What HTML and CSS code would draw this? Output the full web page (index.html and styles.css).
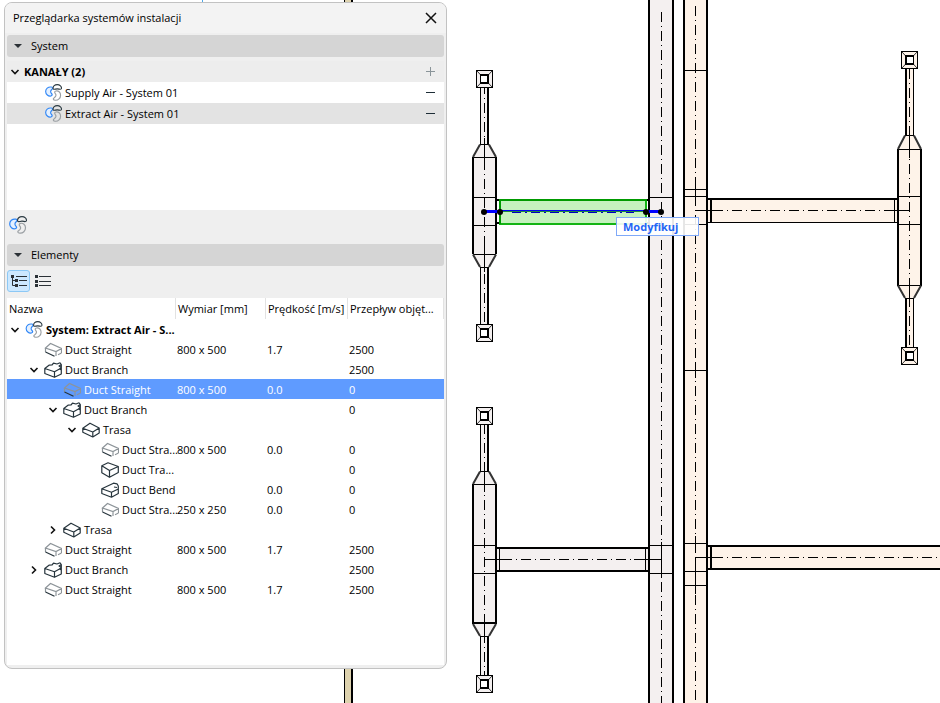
FILE: index.html
```html
<!DOCTYPE html>
<html lang="pl">
<head>
<meta charset="utf-8">
<title>Przeglądarka systemów instalacji</title>
<link rel="stylesheet" href="styles.css">
</head>
<body>
<svg class="defs" width="0" height="0" aria-hidden="true">
  <symbol id="fan" viewBox="0 0 18 18">
    <path class="blade-blue" d="M6.800 3.200C3 2.800.7 5 .7 8c0 3 2.800 5.300 5.600 4.700 1.900-.5 1.500-1.800.4-2.900-1.200-1.200-.9-2.800.5-4C8.400 4.800 8.300 3.400 6.800 3.200Z"/>
    <path class="blade-dark" d="M8.600 5C8.200 2 10.500.7 13 .7s5 1.800 4.300 4.300c-.8 1.200-2.300.2-4.300.2S9.400 6.400 8.600 5Z"/>
    <path class="blade-grey" d="M11.500 7.400c2.600-.7 5 1.400 5 4.400 0 3.200-2.500 5.600-5.600 5.400-2.400-.2-2.700-1.800-1.100-2.700 2-1.200 2.400-2.900 1-4.500-1-1.200-.6-2.300.7-2.600Z"/>
  </symbol>
  <symbol id="straight" viewBox="0 0 18 16">
    <path class="faint" d="M1.500 6V10M1.500 6L6.500 1.500L17.500 6.500L12 9.500ZM12 9.500V14M17.500 6.500V11M14 12.800L17.500 11"/>
    <path class="stroke" d="M1.500 10L10.500 14.300"/>
  </symbol>
  <symbol id="route" viewBox="0 0 18 16">
    <path class="stroke" d="M.8 6.200L8 1.200L17.200 6L10.800 10ZM.8 6.200V10.200L10.800 15L17.200 11V6M10.800 10V15"/>
  </symbol>
  <symbol id="branch" viewBox="0 0 18 16">
    <path class="stroke" d="M.8 6.500L5 3.200L8 3L9.500 1.200L13 2L16 .8L17.300 2.500L15 4L17.300 5.500L15.500 7L17.300 8V12L10.500 15.300L.8 11.500ZM.8 6.500L10.500 9.800L15.500 7M10.500 9.800V15.300M17.300 2.500V8"/>
  </symbol>
  <symbol id="transition" viewBox="0 0 18 16">
    <path class="stroke" d="M.8 3.800L7 .8L17.300 4.500L8.500 8.500ZM.8 3.800V10.800L8.500 15.300L17.300 10.500V4.500M8.500 8.500V15.300"/>
  </symbol>
  <symbol id="bend" viewBox="0 0 18 16">
    <path class="stroke" d="M.8 6.800L12.500 1.200L16 1.800L17.300 4V11.500L10.500 15.200L.8 11.500ZM.8 6.800L10.500 10.300L17.300 7M10.500 10.300V15.200M13 5L16 5.500"/>
  </symbol>
  <symbol id="open" viewBox="0 0 16 16"><path class="chev" d="M4.500 6L8 9.500L11.500 6"/></symbol>
  <symbol id="closed" viewBox="0 0 16 16"><path class="chev" d="M6 4.500L9.500 8L6 11.500"/></symbol>
  <symbol id="triangle" viewBox="0 0 8 4"><path class="solid" d="M0 0H8L4 4Z"/></symbol>
</svg>

<svg class="drawing" role="img" aria-label="Rzut kanałów">
  <rect class="beige" x="344" y="0" width="8" height="100%"/>
  <path class="ln" d="M344.500 0V3000"/><path class="bold" d="M352 0V3000"/>
  <path class="guide" d="M202.500 0V3"/>

  <rect class="grey" x="649" y="0" width="24" height="100%"/>
  <rect class="peach" x="684" y="0" width="23" height="100%"/>
  <path class="bold" d="M649 0V3000M673 0V3000M684 0V3000M707 0V3000"/>
  <path class="ln" d="M650 197.500H672M650 225.500H672M650 545.500H672M650 573.500H672M685 70.500H706M685 189.500H706M685 196.500H706M685 224.500H706M685 370.500H706M685 543.500H706M685 571.500H706M685 585.500H706"/>
  <path class="axis" d="M661.500 12V3000M695.500 6V3000"/>
  <path class="ln" d="M661.500 542V578M695.500 183V206M695.500 362V378M695.500 536V552M695.500 566V594"/>

  <!-- upper left branch -->
  <path class="grey" d="M480 84V144L473 157V254L480 267V328H489V267L496 254V157L489 144V84Z"/>
  <path class="ln" d="M480.500 84V144M480.500 267V328M480 144.500H489M473 157.500H496M473 197.500H496M473 225.500H496M473 254.500H496M480 267.500H489M484.500 138V166M484.500 246V272"/>
  <path class="bold" d="M488 84V144M488 267V328M473 157V254M496 157V254"/>
  <path class="slant" d="M480 144.500L473 157M489 144.500L496 157M473 254.500L480 267M496 254.500L489 267"/>
  <path class="axis" d="M484.500 84V328"/>
  <!-- lower left branch -->
  <path class="grey" d="M480 421V471L473 484V623L480 636V680H489V636L496 623V484L489 471V421Z"/>
  <path class="ln" d="M480.500 421V471M480.500 636V680M480 471.500H489M473 484.500H496M473 545.500H496M473 573.500H496M480 636.500H489M484.500 465V492M484.500 616V642"/>
  <path class="bold" d="M488 421V471M488 636V680M473 484V624M496 484V624M472 623H497"/>
  <path class="slant" d="M480 471.500L473 484M489 471.500L496 484M473 624L480 636M496 624L489 636"/>
  <path class="axis" d="M484.500 424V680"/>
  <!-- right branch -->
  <path class="peach" d="M905 65V135L898 149V285L905 298V351H914V298L921 285V149L914 135V65Z"/>
  <path class="ln" d="M913.500 65V135M913.500 298V351M905 135.500H914M898 149.500H921M898 196.500H921M898 224.500H921M898 285.500H921M905 298.500H914M909.500 130V158M909.500 278V304"/>
  <path class="bold" d="M906 65V135M906 298V351M898 149V286M921 149V286"/>
  <path class="slant" d="M905 135.500L898 149M914 135.500L921 149M898 285.500L905 298M914 298L921 285.500"/>
  <path class="axis" d="M909.500 69V351"/>

  <!-- diffusers -->
  <g id="dl">
    <rect class="grey" x="476" y="70" width="17" height="18"/>
    <path class="slant thin" d="M476.500 70.500L492.500 87.500M492.500 70.500L476.500 87.500"/>
    <rect class="box" x="476.500" y="70.500" width="16" height="17"/>
    <rect class="hole" x="480.500" y="74.500" width="8" height="9"/>
    <path class="bold" d="M480 75H489M480 83H489M488 74V84"/>
  </g>
  <use href="#dl" y="254"/><use href="#dl" y="337"/><use href="#dl" y="605"/>
  <g id="dr">
    <rect class="peach" x="901" y="51" width="17" height="18"/>
    <path class="slant thin" d="M901.500 51.500L917.500 68.500M917.500 51.500L901.500 68.500"/>
    <rect class="box" x="901.500" y="51.500" width="16" height="17"/>
    <rect class="hole" x="905.500" y="55.500" width="8" height="9"/>
    <path class="bold" d="M905 56H914M905 64H914M906 55V65"/>
  </g>
  <use href="#dr" y="296"/>

  <!-- lower cross duct -->
  <rect class="grey" x="497" y="548" width="151" height="23"/>
  <path class="bold" d="M496 548H649M496 571H649"/>
  <path class="ln" d="M499.500 549V570M645.500 549V570M484.500 559.500H508M634 559.500H662"/>
  <path class="axis" d="M502 559.500H640"/>
  <!-- right cross ducts -->
  <rect class="peach" x="708" y="199" width="189" height="24"/>
  <path class="bold" d="M706 199H898M711 199V222"/>
  <path class="ln" d="M706 222.500H898M894.500 200V222M695.500 210.500H720M886 210.500H910"/>
  <path class="axis" d="M713 210.500H890"/>
  <rect class="peach" x="708" y="546" width="100%" height="23"/>
  <path class="bold" d="M706 546H3000M706 569H3000M711 546V569"/>
  <path class="ln" d="M695.500 557.500H720"/>
  <path class="axis" d="M713 557.500H3000"/>

  <!-- selected duct -->
  <path class="bold" d="M496 200H500M496 223H500M645 200H649M645 223H649"/>
  <rect class="picked" x="500" y="200" width="146" height="24"/>
  <path class="picked-edge" d="M499 200H647M500 200V224"/>
  <path class="picked-mid" d="M500 211.500H646"/>
  <path class="blue" d="M500 210.500H646"/>
  <path class="blue-axis" d="M512 212.500H634"/>
  <path class="blue-bold" d="M484 211.500H500M646 211.500H661"/>
  <g class="nodes"><circle cx="484" cy="212" r="3"/><circle cx="500" cy="212" r="3"/><circle cx="646" cy="212" r="3"/><circle cx="661" cy="212" r="3"/></g>
</svg>
<button class="hint" type="button">Modyfikuj</button>

<main class="palette">
  <header class="titlebar">
    <h1>Przeglądarka systemów instalacji</h1>
    <button type="button" class="plain" aria-label="Zamknij"><svg width="16" height="16"><path class="close" d="M3 3L13 13M13 3L3 13"/></svg></button>
  </header>
  <button type="button" class="section"><svg width="8" height="4"><use href="#triangle"/></svg>System</button>
  <section class="systems">
    <div class="line head"><button type="button" class="plain" aria-label="Zwiń"><svg width="16" height="16"><use href="#open"/></svg></button><span>KANAŁY (2)</span><button type="button" class="plain end" aria-label="Dodaj"><svg width="9" height="9"><path class="plus" d="M0 4.500H9M4.500 0V9"/></svg></button></div>
    <div class="line item"><svg width="17" height="17"><use href="#fan"/></svg><span>Supply Air - System 01</span><button type="button" class="plain end" aria-label="Usuń"><svg width="9" height="9"><path class="minus" d="M0 4.500H9"/></svg></button></div>
    <div class="line item current"><svg width="17" height="17"><use href="#fan"/></svg><span>Extract Air - System 01</span><button type="button" class="plain end" aria-label="Usuń"><svg width="9" height="9"><path class="minus" d="M0 4.500H9"/></svg></button></div>
  </section>
  <div class="tools"><button type="button" class="plain" aria-label="System"><svg width="18" height="18"><use href="#fan"/></svg></button></div>
  <button type="button" class="section"><svg width="8" height="4"><use href="#triangle"/></svg>Elementy</button>
  <div class="views">
    <button type="button" class="view on" aria-label="Drzewo"><svg width="18" height="14"><path class="list" d="M2.500 3V11.500H6M2.500 6.500H6M6 2.500H17M9 6.500H17M9 11.500H17"/><path class="solid" d="M1 1H4V4H1ZM5 5H8V8H5ZM5 10H8V13H5Z"/></svg></button>
    <button type="button" class="view" aria-label="Lista"><svg width="18" height="14"><path class="list" d="M5 2.500H17M5 7.500H17M5 11.500H17"/><path class="solid" d="M1 1H4V4H1ZM1 6H4V9H1ZM1 10H4V13H1Z"/></svg></button>
  </div>
  <div class="elements">
    <table>
      <colgroup><col><col class="c-size"><col class="c-speed"><col class="c-flow"></colgroup>
      <thead><tr><th>Nazwa</th><th>Wymiar [mm]</th><th>Prędkość [m/s]</th><th>Przepływ objęt...</th></tr></thead>
      <tbody>
        <tr class="root"><td><div class="node"><button type="button" class="plain" aria-label="Zwiń"><svg width="16" height="16"><use href="#open"/></svg></button><svg class="ico" width="18" height="17"><use href="#fan"/></svg>System: Extract Air - S...</div></td><td></td><td></td><td></td></tr>
        <tr><td><div class="node leaf l1"><svg class="ico" width="18" height="16"><use href="#straight"/></svg>Duct Straight</div></td><td>800 x 500</td><td>1.7</td><td>2500</td></tr>
        <tr><td><div class="node l1"><button type="button" class="plain" aria-label="Zwiń"><svg width="16" height="16"><use href="#open"/></svg></button><svg class="ico" width="18" height="16"><use href="#branch"/></svg>Duct Branch</div></td><td></td><td></td><td>2500</td></tr>
        <tr class="selected"><td><div class="node leaf l2"><svg class="ico" width="18" height="16"><use href="#straight"/></svg>Duct Straight</div></td><td>800 x 500</td><td>0.0</td><td>0</td></tr>
        <tr><td><div class="node l2"><button type="button" class="plain" aria-label="Zwiń"><svg width="16" height="16"><use href="#open"/></svg></button><svg class="ico" width="18" height="16"><use href="#branch"/></svg>Duct Branch</div></td><td></td><td></td><td>0</td></tr>
        <tr><td><div class="node l3"><button type="button" class="plain" aria-label="Zwiń"><svg width="16" height="16"><use href="#open"/></svg></button><svg class="ico" width="18" height="16"><use href="#route"/></svg>Trasa</div></td><td></td><td></td><td></td></tr>
        <tr><td><div class="node leaf l4"><svg class="ico" width="18" height="16"><use href="#straight"/></svg>Duct Stra...</div></td><td>800 x 500</td><td>0.0</td><td>0</td></tr>
        <tr><td><div class="node leaf l4"><svg class="ico" width="18" height="16"><use href="#transition"/></svg>Duct Tra...</div></td><td></td><td></td><td>0</td></tr>
        <tr><td><div class="node leaf l4"><svg class="ico" width="18" height="16"><use href="#bend"/></svg>Duct Bend</div></td><td></td><td>0.0</td><td>0</td></tr>
        <tr><td><div class="node leaf l4"><svg class="ico" width="18" height="16"><use href="#straight"/></svg>Duct Stra...</div></td><td>250 x 250</td><td>0.0</td><td>0</td></tr>
        <tr><td><div class="node l2"><button type="button" class="plain" aria-label="Rozwiń"><svg width="16" height="16"><use href="#closed"/></svg></button><svg class="ico" width="18" height="16"><use href="#route"/></svg>Trasa</div></td><td></td><td></td><td></td></tr>
        <tr><td><div class="node leaf l1"><svg class="ico" width="18" height="16"><use href="#straight"/></svg>Duct Straight</div></td><td>800 x 500</td><td>1.7</td><td>2500</td></tr>
        <tr><td><div class="node l1"><button type="button" class="plain" aria-label="Rozwiń"><svg width="16" height="16"><use href="#closed"/></svg></button><svg class="ico" width="18" height="16"><use href="#branch"/></svg>Duct Branch</div></td><td></td><td></td><td>2500</td></tr>
        <tr><td><div class="node leaf l1"><svg class="ico" width="18" height="16"><use href="#straight"/></svg>Duct Straight</div></td><td>800 x 500</td><td>1.7</td><td>2500</td></tr>
      </tbody>
    </table>
  </div>
</main>
</body>
</html>
```
FILE: styles.css
```css
* { box-sizing: border-box; }
html, body { height: 100%; }
body {
  margin: 0;
  padding: 2px 0 34px 4px;
  display: flex;
  overflow: hidden;
  background: #fff;
  color: #000;
  font: 11px/16px "Open Sans", "Noto Sans", sans-serif;
}
button { font: inherit; color: inherit; cursor: pointer; }
svg { display: block; flex: none; }
.defs { position: absolute; }

/* plan drawing behind the palette */
.drawing { position: absolute; left: 0; top: 0; width: 100%; height: 100%; }
.grey { fill: #f4f0f0; }
.peach { fill: #fef3e9; }
.beige { fill: #ddd2ae; }
.ln, .bold, .axis, .slant, .guide, .blue, .blue-bold, .blue-axis { fill: none; stroke: #000; stroke-width: 1; shape-rendering: crispEdges; }
.bold { stroke-width: 2; }
.axis { stroke-dasharray: 10 4 1 4; }
.slant { stroke: #333; stroke-width: 2; shape-rendering: auto; }
.slant.thin { stroke-width: 1; }
.guide { stroke: #4da6e8; }
.box { fill: none; stroke: #000; shape-rendering: crispEdges; }
.hole { fill: #fff; stroke: #000; shape-rendering: crispEdges; }
.picked { fill: #c5f2be; stroke: #14b414; stroke-width: 2; shape-rendering: crispEdges; }
.picked-edge { fill: none; stroke: #009a00; stroke-width: 2; shape-rendering: crispEdges; }
.picked-mid { stroke: #1e8c3c; shape-rendering: crispEdges; }
.blue { stroke: #0000f0; }
.blue-axis { stroke: #0000c0; stroke-dasharray: 9 4 2 4; }
.blue-bold { stroke: #0000ff; stroke-width: 3; }
.nodes { fill: #000; }

.hint {
  position: absolute;
  left: 616px;
  top: 217px;
  width: 83px;
  height: 19px;
  padding: 0 6px;
  border: 1px solid #7fa9f8;
  background: rgba(255, 255, 255, .9);
  color: #1f66f5;
  font-weight: 700;
  line-height: 17px;
  text-align: left;
}

/* palette */
.palette {
  position: relative;
  width: calc(50% - 25px);
  min-width: 400px;
  display: flex;
  flex-direction: column;
  padding: 0 2px 3px;
  border: 1px solid #c2c2c2;
  border-radius: 8px;
  background: #efefef;
}
.titlebar {
  display: flex;
  align-items: center;
  justify-content: space-between;
  height: 30px;
  margin: 0 -2px 2px;
  padding: 0 7px 0 8px;
  border-radius: 7px 7px 0 0;
  background: #f3f3f3;
}
h1 { margin: 0; font-size: 11px; font-weight: 400; }
.plain { display: block; flex: none; padding: 0; border: 0; background: none; }
.section {
  display: flex;
  align-items: center;
  gap: 9px;
  flex: none;
  height: 22px;
  padding: 0 7px;
  border: 0;
  border-radius: 3px;
  background: #d5d5d5;
}
.systems { flex: none; height: 149px; margin-top: 4px; background: #fff; }
.line { display: flex; align-items: center; height: 21px; padding-right: 9px; }
.line.head { background: #ededed; font-weight: 700; gap: 1px; }
.line.item { padding-left: 38px; gap: 3px; }
.line.current { background: #e3e3e3; }
.end { margin-left: auto; }
.tools { flex: none; height: 34px; padding: 6px 2px; }
.views { display: flex; flex: none; gap: 1px; height: 32px; padding: 4px 0; }
.view {
  display: grid;
  place-items: center;
  width: 23px;
  height: 22px;
  padding: 0;
  border: 1px solid transparent;
  border-radius: 3px;
  background: none;
}
.view.on { border-color: #8cc8f5; background: #cce8ff; }

.elements { flex: 1; background: #fff; }
table { width: 100%; border-collapse: separate; border-spacing: 0; table-layout: fixed; }
.c-size { width: 90px; }
.c-speed { width: 82px; }
.c-flow { width: 96px; }
th, td { padding: 1px 0 0 1px; text-align: left; white-space: nowrap; }
th { height: 21px; padding-left: 2px; border-right: 1px solid #e2e2e2; font-weight: 400; }
td { height: 20px; }
.node { display: flex; align-items: center; height: 19px; margin-left: -1px; }
.ico { margin: 0 3px 0 2px; }
.leaf .ico { margin-left: 18px; }
.l1 { padding-left: 19px; }
.l2 { padding-left: 38px; }
.l3 { padding-left: 57px; }
.l4 { padding-left: 76px; }
.root { font-weight: 700; }
.selected { background: #5f9bff; color: #fff; }

/* icon strokes */
symbol path { fill: none; stroke-width: 1.2; }
.blade-blue { stroke: #2f86f6; fill: #e4f0ff; }
.blade-dark { stroke: #2b3a42; }
.blade-grey { stroke: #9a9fa3; }
.stroke { stroke: #26343c; stroke-linejoin: round; }
.faint { stroke: #8d9499; }
symbol .chev { stroke: #111; stroke-width: 1.6; }
.solid, symbol .solid { fill: #2b3136; }
.close { stroke: #111; stroke-width: 1.5; }
.plus { stroke: #8a9499; }
.minus { stroke: #1d2d36; }
.list { fill: none; stroke: #2b3136; }
```
